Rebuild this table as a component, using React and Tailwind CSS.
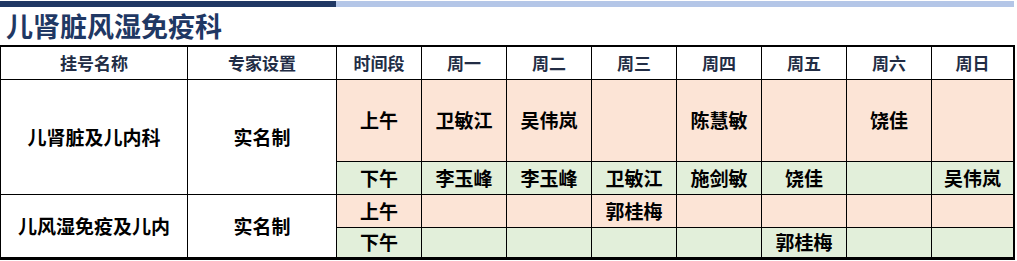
const days = ["周一", "周二", "周三", "周四", "周五", "周六", "周日"]

const departments = [
    {
        name: "儿肾脏及儿内科",
        mode: "实名制",
        am: ["卫敏江", "吴伟岚", "", "陈慧敏", "", "饶佳", ""],
        pm: ["李玉峰", "李玉峰", "卫敏江", "施剑敏", "饶佳", "", "吴伟岚"],
    },
    {
        name: "儿风湿免疫及儿内",
        mode: "实名制",
        am: ["", "", "郭桂梅", "", "", "", ""],
        pm: ["", "", "", "", "郭桂梅", "", ""],
    },
]

function Cell({ children, className = "" }) {
    return (
        <div className={`flex items-center justify-center ${className}`}>
            {children}
        </div>
    )
}

export default function App() {
    return (
        <div className="w-[1017px] h-[261px] bg-white overflow-hidden font-['Noto_Sans_CJK_SC','Liberation_Sans',sans-serif]">
            {/* Top accent bar */}
            <div className="mt-px flex h-[6px]">
                <div className="w-[336px] bg-[#203864]" />
                <div className="w-[678px] bg-[#b4c6e7]" />
            </div>

            {/* Title */}
            <h1 className="h-[38px] pl-[6px] text-[27px] leading-[38px] font-bold text-[#1f3864]">
                儿肾脏风湿免疫科
            </h1>

            {/* Schedule grid */}
            <div className="grid w-[1015px] grid-cols-[186px_148px_repeat(7,84px)_81px] grid-rows-[32px_81px_32px_32px_29px] gap-px bg-black border-l border-t-2 border-r-2 border-b-[3px] border-black font-bold">
                {/* Header row */}
                <Cell className="bg-white text-[17px] text-[#222d45]">挂号名称</Cell>
                <Cell className="bg-white text-[17px] text-[#222d45]">专家设置</Cell>
                <Cell className="bg-white text-[17px] text-[#222d45]">时间段</Cell>
                {days.map((d) => (
                    <Cell key={d} className="bg-white text-[17px] text-[#222d45]">
                        {d}
                    </Cell>
                ))}

                {departments.map((dep) => (
                    <div key={dep.name} className="contents">
                        <Cell className="row-span-2 bg-white text-[19px] text-black">{dep.name}</Cell>
                        <Cell className="row-span-2 bg-white text-[19px] text-black">{dep.mode}</Cell>
                        <Cell className="bg-[#fce4d6] text-[19px] text-black">上午</Cell>
                        {dep.am.map((n, i) => (
                            <Cell key={"am" + i} className="bg-[#fce4d6] text-[19px] text-black">
                                {n}
                            </Cell>
                        ))}
                        <Cell className="bg-[#e2efda] text-[19px] text-black">下午</Cell>
                        {dep.pm.map((n, i) => (
                            <Cell key={"pm" + i} className="bg-[#e2efda] text-[19px] text-black">
                                {n}
                            </Cell>
                        ))}
                    </div>
                ))}
            </div>
        </div>
    )
}
